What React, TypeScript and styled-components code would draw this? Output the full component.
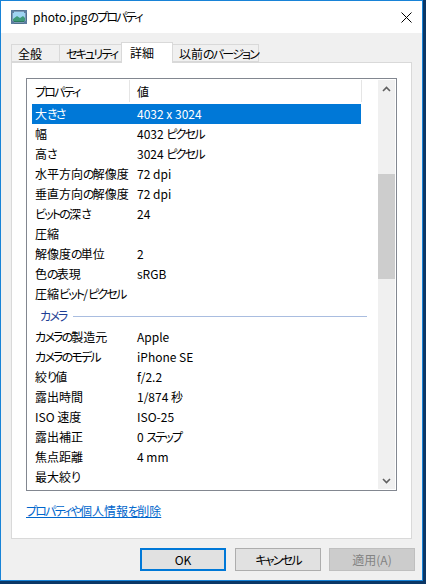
import React from "react";
import styled, { createGlobalStyle } from "styled-components";

const Global = createGlobalStyle`
  html, body { margin: 0; padding: 0; background: #0b3766; }
  body {
    font-family: "Noto Sans CJK JP", "Noto Sans", sans-serif;
    font-size: 12px;
    font-feature-settings: "palt";
    color: #000;
  }
  #root { width: 426px; height: 584px; }
  * { box-sizing: border-box; }
`;

const Kana = styled.span`
  letter-spacing: -1.8px;
`;

const KANA = /([\u3040-\u30ff]+)/;

const Jp = ({ children }: { children: string }) => (
  <>
    {children.split(KANA).map((part, i) =>
      i % 2 === 1 ? <Kana key={i}>{part}</Kana> : part
    )}
  </>
);

const Window = styled.div`
  width: 423px;
  height: 581px;
  border: 1px solid #1883d7;
  background: #f0f0f0;
  display: flex;
  flex-direction: column;
`;

const TitleBar = styled.div`
  height: 32px;
  background: #fff;
  display: flex;
  align-items: center;
  padding: 0 10px;
  flex-shrink: 0;
`;

const TitleText = styled.div`
  margin-left: 6px;
  flex: 1;
  line-height: 16px;
`;

const TabStrip = styled.div`
  margin-top: 9px;
  margin-bottom: -1px;
  padding-left: 10px;
  height: 21px;
  display: flex;
  align-items: flex-end;
  position: relative;
  z-index: 1;
  flex-shrink: 0;
`;

const Tab = styled.div<{ $w: number; $active?: boolean }>`
  width: ${(p) => p.$w}px;
  height: ${(p) => (p.$active ? 21 : 18)}px;
  margin-bottom: ${(p) => (p.$active ? 0 : 1)}px;
  margin-left: -1px;
  &:first-child { margin-left: 0; }
  border: 1px solid #d9d9d9;
  border-bottom: ${(p) => (p.$active ? "none" : "1px solid #d9d9d9")};
  background: ${(p) => (p.$active ? "#fff" : "#f0f0f0")};
  padding-left: ${(p) => (p.$active ? 8 : 6)}px;
  display: flex;
  align-items: center;
  padding-bottom: ${(p) => (p.$active ? 2 : 0)}px;
  position: relative;
  z-index: ${(p) => (p.$active ? 2 : 1)};
  white-space: nowrap;
`;

const Panel = styled.div`
  margin: 0 10px;
  height: 477px;
  border: 1px solid #d9d9d9;
  background: #fff;
  padding: 15px 14px 0 14px;
  position: relative;
  z-index: 0;
  flex-shrink: 0;
`;

const ListBox = styled.div`
  width: 371px;
  height: 413px;
  border: 1px solid #828790;
  padding: 1px;
  display: flex;
`;

const ListContent = styled.div`
  flex: 1;
  overflow: hidden;
  display: flex;
  flex-direction: column;
`;

const HeaderRow = styled.div`
  height: 22px;
  display: flex;
  flex-shrink: 0;
  margin-bottom: 2px;
`;

const HeaderCell = styled.div<{ $w: number }>`
  width: ${(p) => p.$w}px;
  border-right: 1px solid #e5e5e5;
  padding-left: 7px;
  display: flex;
  align-items: center;
`;

const Row = styled.div<{ $selected?: boolean }>`
  margin-left: 4px;
  width: 329px;
  height: 20px;
  display: flex;
  align-items: center;
  padding-bottom: 1px;
  flex-shrink: 0;
  background: ${(p) => (p.$selected ? "#0078d7" : "transparent")};
  color: ${(p) => (p.$selected ? "#fff" : "#000")};
  white-space: nowrap;
`;

const NameCell = styled.div`
  width: 102px;
  padding-left: 3px;
`;

const ValueCell = styled.div`
  padding-left: 3px;
`;

const GroupHeader = styled.div`
  height: 23px;
  display: flex;
  align-items: center;
  padding-left: 12px;
  padding-right: 11px;
  color: #1e3e94;
  flex-shrink: 0;
`;

const GroupLine = styled.div`
  flex: 1;
  height: 1px;
  background: #a9bde0;
  margin-left: 6px;
  margin-top: 1px;
`;

const ScrollBar = styled.div`
  width: 17px;
  background: #f0f0f0;
  display: flex;
  flex-direction: column;
`;

const ArrowBox = styled.div`
  height: 17px;
  display: flex;
  align-items: center;
  justify-content: center;
  flex-shrink: 0;
`;

const Track = styled.div`
  flex: 1;
`;

const Thumb = styled.div<{ $top: number; $h: number }>`
  margin-top: ${(p) => p.$top}px;
  height: ${(p) => p.$h}px;
  background: #cdcdcd;
`;

const Link = styled.a`
  display: inline-block;
  margin-top: 12px;
  color: #0066cc;
  text-decoration: underline;
  line-height: 16px;
  cursor: pointer;
`;

const Footer = styled.div`
  margin-top: 9px;
  padding-right: 7px;
  display: flex;
  justify-content: flex-end;
  gap: 8px;
`;

const Button = styled.button<{ $variant?: "default" | "normal" | "disabled" }>`
  width: 86px;
  height: 23px;
  font: inherit;
  padding: 0;
  background: ${(p) => (p.$variant === "disabled" ? "#cccccc" : "#e1e1e1")};
  color: ${(p) => (p.$variant === "disabled" ? "#838383" : "#000")};
  border: ${(p) =>
    p.$variant === "default"
      ? "2px solid #0078d7"
      : p.$variant === "disabled"
      ? "1px solid #bfbfbf"
      : "1px solid #adadad"};
  &:first-child { margin-right: 1px; }
`;

const ImageIcon = () => (
  <svg width="16" height="14" viewBox="0 0 16 14">
    <rect x="0.5" y="0.5" width="15" height="13" fill="#7f9bb8" stroke="#50708f" />
    <rect x="2" y="2" width="12" height="10" fill="#9fd4f2" />
    <path d="M2 9 L6 6 L9 8 L12 6 L14 8 L14 12 L2 12 Z" fill="#3f9a7a" />
    <path d="M2 11 L14 11 L14 12 L2 12 Z" fill="#2b7a5e" />
    <rect x="0" y="0" width="3" height="3" fill="#5d7ea0" />
    <rect x="13" y="0" width="3" height="3" fill="#5d7ea0" />
    <rect x="0" y="11" width="3" height="3" fill="#5d7ea0" />
    <rect x="13" y="11" width="3" height="3" fill="#5d7ea0" />
  </svg>
);

const CloseIcon = () => (
  <svg width="11" height="11" viewBox="0 0 11 11">
    <path d="M0.5 0.5 L10.5 10.5 M10.5 0.5 L0.5 10.5" stroke="#000" strokeWidth="1" />
  </svg>
);

const Chevron = ({ up }: { up?: boolean }) => (
  <svg width="9" height="6" viewBox="0 0 9 6">
    <path
      d={up ? "M1 5 L4.5 1.5 L8 5" : "M1 1 L4.5 4.5 L8 1"}
      stroke="#606060"
      strokeWidth="1.6"
      fill="none"
    />
  </svg>
);

const rows1: [string, string][] = [
  ["大きさ", "4032 x 3024"],
  ["幅", "4032 ピクセル"],
  ["高さ", "3024 ピクセル"],
  ["水平方向の解像度", "72 dpi"],
  ["垂直方向の解像度", "72 dpi"],
  ["ビットの深さ", "24"],
  ["圧縮", ""],
  ["解像度の単位", "2"],
  ["色の表現", "sRGB"],
  ["圧縮ビット/ピクセル", ""],
];

const rows2: [string, string][] = [
  ["カメラの製造元", "Apple"],
  ["カメラのモデル", "iPhone SE"],
  ["絞り値", "f/2.2"],
  ["露出時間", "1/874 秒"],
  ["ISO 速度", "ISO-25"],
  ["露出補正", "0 ステップ"],
  ["焦点距離", "4 mm"],
  ["最大絞り", ""],
];

export default function App() {
  return (
    <>
      <Global />
      <Window>
        <TitleBar>
          <ImageIcon />
          <TitleText>
            <Jp>photo.jpgのプロパティ</Jp>
          </TitleText>
          <CloseIcon />
        </TitleBar>
        <TabStrip>
          <Tab $w={49}>全般</Tab>
          <Tab $w={63}>
            <Jp>セキュリティ</Jp>
          </Tab>
          <Tab $w={52} $active>
            詳細
          </Tab>
          <Tab $w={87}>
            <Jp>以前のバージョン</Jp>
          </Tab>
        </TabStrip>
        <Panel>
          <ListBox>
            <ListContent>
              <HeaderRow>
                <HeaderCell $w={102}>
                  <Jp>プロパティ</Jp>
                </HeaderCell>
                <HeaderCell $w={232}>値</HeaderCell>
              </HeaderRow>
              {rows1.map(([n, v], i) => (
                <Row key={n} $selected={i === 0}>
                  <NameCell>
                    <Jp>{n}</Jp>
                  </NameCell>
                  <ValueCell>
                    <Jp>{v}</Jp>
                  </ValueCell>
                </Row>
              ))}
              <GroupHeader>
                <Jp>カメラ</Jp>
                <GroupLine />
              </GroupHeader>
              {rows2.map(([n, v]) => (
                <Row key={n}>
                  <NameCell>
                    <Jp>{n}</Jp>
                  </NameCell>
                  <ValueCell>
                    <Jp>{v}</Jp>
                  </ValueCell>
                </Row>
              ))}
            </ListContent>
            <ScrollBar>
              <ArrowBox>
                <Chevron up />
              </ArrowBox>
              <Track>
                <Thumb $top={77} $h={105} />
              </Track>
              <ArrowBox>
                <Chevron />
              </ArrowBox>
            </ScrollBar>
          </ListBox>
          <Link>
            <Jp>プロパティや個人情報を削除</Jp>
          </Link>
        </Panel>
        <Footer>
          <Button $variant="default">OK</Button>
          <Button $variant="normal">
            <Jp>キャンセル</Jp>
          </Button>
          <Button $variant="disabled">適用(A)</Button>
        </Footer>
      </Window>
    </>
  );
}
